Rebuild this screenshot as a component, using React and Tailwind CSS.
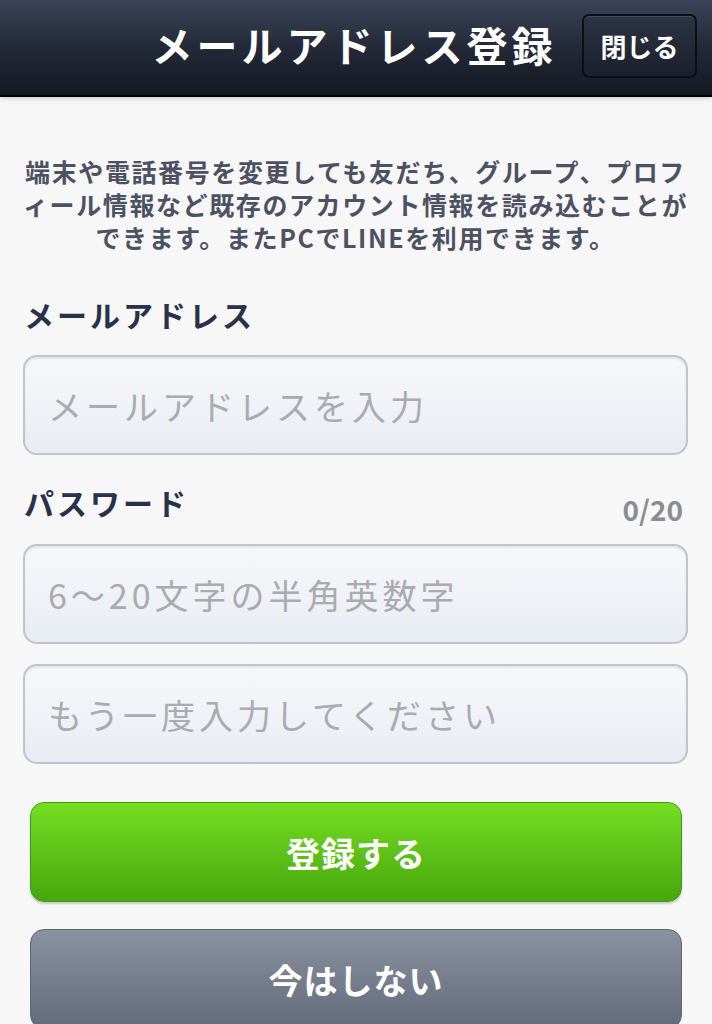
import React from "react";

const font = { fontFamily: '"Noto Sans CJK JP", "Noto Sans", sans-serif' };

const Field = ({ placeholder }) => (
  <div className="h-[100px] rounded-[14px] border-2 border-[#c2c4c8] bg-gradient-to-b from-[#f7f8fa] to-[#e8ecf3] shadow-[inset_0_2px_2px_rgba(0,0,0,0.08)] flex items-center px-[23px]">
    <input
      className="w-full bg-transparent outline-none text-[34px] tracking-[4px] text-[#555] placeholder:text-[#a9abaf]"
      style={font}
      placeholder={placeholder}
    />
  </div>
);

const App = () => {
  return (
    <div className="min-h-screen bg-[#f7f7f7] overflow-hidden" style={font}>
      {/* Header */}
      <div className="relative h-[97px] bg-gradient-to-b from-[#3c4458] via-[#232938] to-[#151922] border-b-2 border-black shadow-[0_2px_4px_rgba(0,0,0,0.15)] flex items-center justify-center">
        <h1 className="text-[41px] font-bold tracking-[4px] text-white leading-none pb-[6px] pr-[4px]">
          メールアドレス登録
        </h1>
        <button className="absolute right-[15px] top-[14px] w-[115px] h-[64px] rounded-[7px] border-2 border-[#0b0e14] bg-gradient-to-b from-[#2c3343] to-[#1b202b] shadow-[inset_0_1px_0_rgba(255,255,255,0.12)] text-white text-[26px] font-bold leading-none">
          閉じる
        </button>
      </div>

      <div className="pl-[23px] pr-[24px]">
        {/* Description */}
        <p className="pt-[58px] text-center text-[25px] font-bold leading-[33px] tracking-[1.6px] text-[#4c5262] whitespace-nowrap">
          端末や電話番号を変更しても友だち、グループ、プロフ
          <br />
          ィール情報など既存のアカウント情報を読み込むことが
          <br />
          できます。またPCでLINEを利用できます。
        </p>

        {/* Email */}
        <h2 className="mt-[40px] pl-[1px] text-[30px] font-bold leading-[40px] tracking-[3px] text-[#28324a]">
          メールアドレス
        </h2>
        <div className="mt-[21px]">
          <Field placeholder="メールアドレスを入力" />
        </div>

        {/* Password */}
        <div className="mt-[27px] flex items-end justify-between">
          <h2 className="pl-[1px] text-[30px] font-bold leading-[40px] tracking-[3px] text-[#28324a]">
            パスワード
          </h2>
          <span className="text-[28px] font-bold leading-none text-[#8c8d90] pr-[5px] -mb-[1px]">
            0/20
          </span>
        </div>
        <div className="mt-[22px] flex flex-col gap-[20px]">
          <Field placeholder="6〜20文字の半角英数字" />
          <Field placeholder="もう一度入力してください" />
        </div>

        {/* Buttons */}
        <div className="mt-[38px] ml-[7px] mr-[6px] flex flex-col gap-[27px]">
          <button className="h-[100px] rounded-[14px] border border-[#3f9c12] bg-gradient-to-b from-[#75de22] to-[#46a70c] shadow-[0_2px_2px_rgba(0,0,0,0.18)] text-white text-[34px] font-bold tracking-[1px]">
            登録する
          </button>
          <button className="h-[100px] rounded-[14px] border border-[#5d6472] bg-gradient-to-b from-[#8a91a0] to-[#646b7a] text-white text-[34px] font-bold tracking-[1px]">
            今はしない
          </button>
        </div>
      </div>
    </div>
  );
};

export default App;
